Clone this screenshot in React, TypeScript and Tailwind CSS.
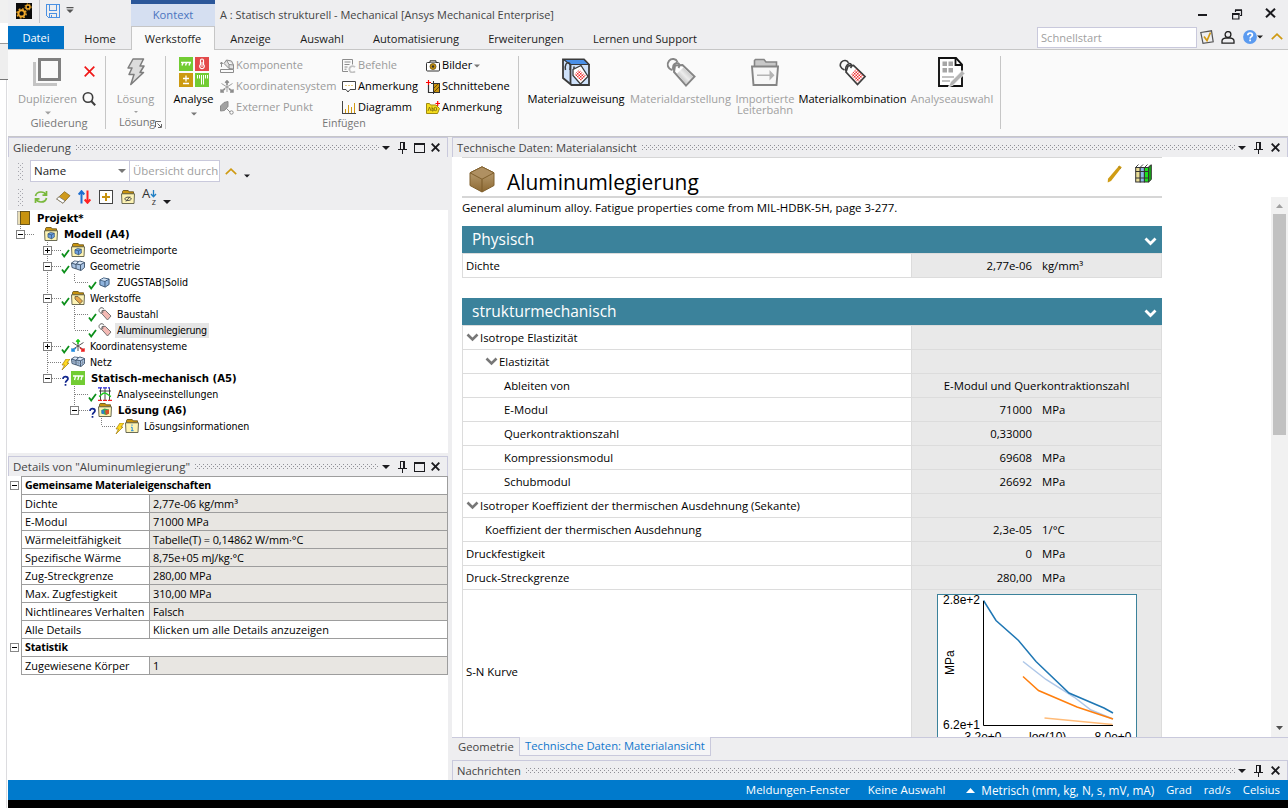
import type { ReactNode } from "react";

/* ---------- small shared glyphs ---------- */

function Caret({ className = "", color = "#777" }: { className?: string; color?: string }) {
  return (
    <svg width="8" height="4" viewBox="0 0 8 4" className={className}>
      <path d="M0 0h8L4 4z" fill={color} />
    </svg>
  );
}

function Dots({ id }: { id: string }) {
  return (
    <svg className="h-[5px] min-w-0 flex-1" shapeRendering="crispEdges">
      <defs>
        <pattern id={id} width="4" height="4" patternUnits="userSpaceOnUse">
          <rect width="1" height="1" fill="#8f8f96" />
          <rect x="2" y="2" width="1" height="1" fill="#8f8f96" />
        </pattern>
      </defs>
      <rect width="100%" height="5" fill={`url(#${id})`} />
    </svg>
  );
}

function Handle({ id }: { id: string }) {
  return (
    <svg width="5" height="17" shapeRendering="crispEdges">
      <defs>
        <pattern id={id} width="4" height="4" patternUnits="userSpaceOnUse">
          <rect width="1" height="1" fill="#a6a6ad" />
          <rect x="2" y="2" width="1" height="1" fill="#a6a6ad" />
        </pattern>
      </defs>
      <rect width="5" height="17" fill={`url(#${id})`} />
    </svg>
  );
}

function Pin() {
  return (
    <svg width="9" height="12" viewBox="0 0 9 12" shapeRendering="crispEdges">
      <path d="M2 0h5v7h2v1H5v4H4V8H0V7h2zM3 1v6h2V1z" fill="#1b1b1f" fillRule="evenodd" />
    </svg>
  );
}

function Cross() {
  return (
    <svg width="9" height="9" viewBox="0 0 9 9">
      <path d="M0.7 0.7l7.6 7.6M8.3 0.7L0.7 8.3" stroke="#1b1b1f" strokeWidth="1.9" />
    </svg>
  );
}

function PaneHeader({ title, id, square = false, titleClass = "text-[11.25px]" }: { title: string; id: string; square?: boolean; titleClass?: string }) {
  return (
    <div className="flex h-5 shrink-0 items-center border-x border-t border-[#c9c9dc] bg-[#eeeef0] pl-1 pr-[7px]">
      <span className={`mr-[5px] whitespace-nowrap leading-[18px] text-[#444] ${titleClass}`}>{title}</span>
      <Dots id={id} />
      <Caret className="ml-[3px]" color="#1b1b1f" />
      <span className="ml-2 flex">
        <Pin />
      </span>
      {square && (
        <svg width="11" height="10" viewBox="0 0 11 10" className="ml-[7px]" shapeRendering="crispEdges">
          <path d="M0 0h11v10H0zM1 2v7h9V2z" fill="#1b1b1f" fillRule="evenodd" />
        </svg>
      )}
      <span className={square ? "ml-[6px] flex" : "ml-[8px] flex"}>
        <Cross />
      </span>
    </div>
  );
}

/* ---------- ribbon icons ---------- */

function LogoIcon() {
  return (
    <svg width="16" height="16" viewBox="0 0 16 16">
      <rect width="16" height="16" fill="#0a0a0a" />
      <circle cx="5.6" cy="10.4" r="3.2" fill="none" stroke="#f0a92b" strokeWidth="2" />
      <circle cx="5.6" cy="10.4" r="4.6" fill="none" stroke="#f0a92b" strokeWidth="1.3" strokeDasharray="1.8 1.8" />
      <circle cx="12" cy="4" r="2" fill="none" stroke="#f0a92b" strokeWidth="1.4" />
      <circle cx="12" cy="4" r="3.1" fill="none" stroke="#f0a92b" strokeWidth="1" strokeDasharray="1.3 1.3" />
    </svg>
  );
}

function SaveIcon() {
  return (
    <svg width="14" height="14" viewBox="0 0 14 14" fill="none" stroke="#4a90e2" shapeRendering="crispEdges">
      <path d="M0.5 0.5h13v13h-11l-2-2zM3.5 0.5v6h7v-6M3.5 13.5v-4h7v4M5.5 10.5v3" />
    </svg>
  );
}

function DuplicateIcon() {
  return (
    <svg width="28" height="28" viewBox="0 0 28 28">
      <path d="M1.5 4v22.5H24" fill="none" stroke="#c4c4c4" strokeWidth="3" />
      <rect x="6.5" y="1.5" width="20" height="20" fill="#fafafa" stroke="#808080" strokeWidth="3" />
    </svg>
  );
}

function BoltIcon() {
  return (
    <svg width="18" height="28" viewBox="0 0 18 28">
      <path d="M6 1h10.500l-3.500 7h4l-4 6.500h3.500L3.800 26.500 7 16.500H2L5 10H1z" fill="#dcdcdc" stroke="#7d7d7d" strokeWidth="1.500" strokeLinejoin="round" />
    </svg>
  );
}

function AnalysisIcon() {
  return (
    <svg width="30" height="30" viewBox="0 0 30 30">
      <rect width="14" height="14" fill="#72cc33" />
      <path d="M2 5.500h10M4 6L3 8.500M7.500 6l-1 2.500M11 6l-1 2.500" stroke="#fff" strokeWidth="1.400" />
      <rect x="16" width="14" height="14" fill="#e34a4a" />
      <path d="M21.500 7.500V3.500a1.500 1.500 0 013 0v4a2.300 2.300 0 11-3 0z" fill="none" stroke="#fff" strokeWidth="1.200" />
      <path d="M23 5v5" stroke="#fff" />
      <rect y="16" width="14" height="14" fill="#cc9a10" />
      <path d="M4 21.500h6M7 18.500v6M4 26.500h6" stroke="#fff" strokeWidth="1.300" />
      <rect x="16" y="16" width="14" height="14" fill="#72cc33" />
      <path d="M18.500 18v3.500M20.500 18v3.500M22.500 18v9.500M24.500 18v9.500M26.500 18v3.500M28.500 18v3.500" stroke="#fff" strokeWidth="1" />
    </svg>
  );
}

function ComponentIcon() {
  return (
    <svg width="14" height="14" viewBox="0 0 14 14" fill="none" stroke="#8c8c8c">
      <path d="M4 4.500L6.500 1l5 1L13.500 6v4L9 9.500 4 4.500zM6.500 1L9 5.500l4.500.5M9 5.500v4" fill="#e2e2e2" />
      <path d="M0.500 10.500h13v3H.500zM1.500 8V3M0 5l1.500-2L3 5" />
    </svg>
  );
}

function CoordIcon({ colored = false }: { colored?: boolean }) {
  const [a, b, c] = colored ? ["#18d018", "#e22", "#1f8be0"] : ["#8c8c8c", "#8c8c8c", "#8c8c8c"];
  return (
    <svg width="14" height="14" viewBox="0 0 14 14" fill="none">
      <path d="M1.500 3.500l11 7M12.500 3.500l-11 7M7 1v11" stroke={colored ? "#555" : "#a0a0a0"} strokeWidth="1" />
      <path d="M7 5V1M5.200 2.800L7 .800l1.800 2" stroke={a} strokeWidth="1.500" />
      <path d="M9 9l3.500 2.500M13 9.300v2.700h-3" stroke={b} strokeWidth="1.500" />
      <path d="M5 9l-3.500 2.500M1 9.300v2.700h3" stroke={c} strokeWidth="1.500" />
    </svg>
  );
}

function RemotePointIcon() {
  return (
    <svg width="14" height="14" viewBox="0 0 14 14">
      <path d="M0.500 5L4 1.500 8 .500v5L4.500 9.500l-4 .500z" fill="#a2a2a2" stroke="#8c8c8c" />
      <path d="M6 7l4.500 4.500" stroke="#8c8c8c" />
      <circle cx="11.500" cy="11.500" r="1.700" fill="#fff" stroke="#8c8c8c" />
    </svg>
  );
}

function CommandsIcon() {
  return (
    <svg width="14" height="14" viewBox="0 0 14 14" fill="none">
      <path d="M6 12.500H.500V.500h10v5" stroke="#8c8c8c" />
      <path d="M2.500 3h6M2.500 5.500h5M2.500 8h3M2.500 10.200h2" stroke="#8c8c8c" />
      <path d="M13 8.200a3.200 3.200 0 100 4.200" stroke="#c2c2c2" strokeWidth="1.800" />
    </svg>
  );
}

function CommentIcon() {
  return (
    <svg width="14" height="12" viewBox="0 0 14 12" fill="none">
      <path d="M0.500.500h13v8H8l-2 2.500-2-2.500H.500z" fill="#fff" stroke="#444" />
      <path d="M3.500 4.500h1M6.500 4.500h1M9.500 4.500h1" stroke="#c90" />
    </svg>
  );
}

function ChartIcon() {
  return (
    <svg width="14" height="13" viewBox="0 0 14 13" fill="none" shapeRendering="crispEdges">
      <path d="M0.500 0v12.500H14" stroke="#444" />
      <path d="M3.500 12V8M6.500 12V4M9.500 12V6M12.500 12V2" stroke="#d39a12" />
    </svg>
  );
}

function CameraIcon() {
  return (
    <svg width="14" height="12" viewBox="0 0 14 12">
      <rect x="0.500" y="2.500" width="13" height="8.500" rx="1" fill="#fff" stroke="#333" />
      <path d="M4 2.500V.800h6v1.700" fill="#ddd" stroke="#333" />
      <circle cx="7" cy="6.500" r="3" fill="#c8930f" stroke="#6b5010" strokeWidth="0.800" />
      <circle cx="7" cy="6.500" r="1.200" fill="#333" />
    </svg>
  );
}

function SectionIcon() {
  return (
    <svg width="14" height="14" viewBox="0 0 14 14">
      <path d="M2.500 5v7.500h5M5 3.500h8" fill="none" stroke="#333" strokeWidth="1.200" />
      <rect x="7.500" y="3.500" width="6" height="9" fill="#c8930f" stroke="#333" />
      <path d="M8 8l4-4M8 12l5-5" stroke="#6a4d00" />
      <path d="M7.500 1v13" stroke="#333" />
      <path d="M0 2.500h5M2.500 0v5" stroke="#f00" strokeWidth="1.200" />
    </svg>
  );
}

function LabelIcon() {
  return (
    <svg width="14" height="14" viewBox="0 0 14 14">
      <path d="M0.500 2.500h3l1 1.500H10l3.500 3.500L11.500 12.500H.500z" fill="#f4dc1c" stroke="#a08b10" />
      <path d="M2 10l1.500-4L5 10M6 5.500V10h1.200V7.500H6M8.300 8a1.200 1.200 0 102.200 0 1.200 1.200 0 10-2.200 0" fill="none" stroke="#7a6a10" strokeWidth="0.800" />
      <path d="M9.500 2.500h4.500M11.700 0v5" stroke="#f00" strokeWidth="1.200" />
    </svg>
  );
}

function CheckerDefs({ id }: { id: string }) {
  return (
    <defs>
      <pattern id={id} width="3" height="3" patternUnits="userSpaceOnUse">
        <rect width="1.500" height="1.500" fill="#e33" />
        <rect x="1.500" y="1.500" width="1.500" height="1.500" fill="#e33" />
      </pattern>
    </defs>
  );
}

function MaterialAssignIcon() {
  return (
    <svg width="28" height="28" viewBox="0 0 28 28">
      <CheckerDefs id="chk-assign" />
      <path d="M1 1.500h21l5 5V27H9.500L1 20z" fill="#cfe2fb" stroke="#3a3a3a" strokeWidth="1.800" />
      <path d="M1.500 1.500H22l5 5H8z" fill="#4a90e8" stroke="#3a3a3a" strokeWidth="1.200" />
      <path d="M8.500 6.500V26" stroke="#3a3a3a" strokeWidth="1.800" />
      <path d="M3.500 12c-1-5 1-8 3.500-7s1 5 1 7M12 13V8.500" fill="none" stroke="#3a3a3a" strokeWidth="1.500" />
      <path d="M11 11.500l8-4 7 11-7.500 7.500-7.500-8.500z" fill="#fff" stroke="#3a3a3a" strokeWidth="1.300" />
      <path d="M17 11.500l7 6.500-5 5-6.500-6.500z" fill="url(#chk-assign)" />
    </svg>
  );
}

function MaterialDisplayIcon() {
  return (
    <svg width="30" height="30" viewBox="0 0 30 30">
      <defs>
        <linearGradient id="tag-fade" x1="0" y1="1" x2="1" y2="0">
          <stop offset="0" stopColor="#9a9a9a" />
          <stop offset="0.5" stopColor="#ececec" />
          <stop offset="1" stopColor="#a2a2a2" />
        </linearGradient>
      </defs>
      <path d="M9 8.500L8 15l12 13.500 8.500-9L16.500 8z" fill="#fff" stroke="#858585" strokeWidth="2" />
      <path d="M17.500 10.500l9.500 9-7 7.500-9-10.500z" fill="url(#tag-fade)" />
      <path d="M6 13C1.500 11.500.500 7 3 3.800c2.500-2.800 7-2.300 8.500 1.200M7.500 13.500C6.500 10 7.500 7 10.500 6c2.500-.5 4 2 2 5" fill="none" stroke="#858585" strokeWidth="1.900" />
    </svg>
  );
}

function MaterialCombineIcon() {
  return (
    <svg width="28" height="29" viewBox="0 0 28 29">
      <CheckerDefs id="chk-comb" />
      <path d="M9 8l-2 6 11.500 12.500 7.500-8L14.500 7.500z" fill="#fff" stroke="#3d3d3d" strokeWidth="1.700" />
      <path d="M17 11l7.500 7.300-5.800 6.200-7-7.500z" fill="url(#chk-comb)" />
      <path d="M5.500 12C1.500 10.500 0 7 2.500 4c2.300-2.300 5.500-1.800 7 .8M7 13c-1-3 .5-6.500 3-7.300 2.200-.5 3.500 1.800 1.500 4.300" fill="none" stroke="#3d3d3d" strokeWidth="1.600" />
    </svg>
  );
}

function ImportFolderIcon() {
  return (
    <svg width="28" height="28" viewBox="0 0 28 28">
      <path d="M3.500 9V2.500l1-1H13l2 2.500h10.500V9" fill="#c8c8c8" stroke="#858585" strokeWidth="1.600" />
      <path d="M1 8.500h26L25.500 27h-23z" fill="#f7f7f7" stroke="#858585" strokeWidth="1.900" />
      <path d="M6 16.500h12.500v-4.500l5 5.200-5 5.200V18H6z" fill="#b4b4b4" />
    </svg>
  );
}

function AnalysisSelectIcon() {
  return (
    <svg width="28" height="30" viewBox="0 0 28 30">
      <path d="M1 1h17l6 6.500V29H1z" fill="#fff" stroke="#111" strokeWidth="1.900" />
      <path d="M17.500 1v7H24" fill="none" stroke="#111" strokeWidth="1.800" />
      <path d="M4.500 4.500h4.500v4.500H4.500zM10.500 4.500H15v4.500h-4.500zM4.500 11h4.500v4.500H4.500zM10.500 11H15v4.500h-4.500z" fill="#a6a6a6" />
      <path d="M4 20h12M4 24h8" stroke="#b0b0b0" strokeWidth="1.500" />
      <path d="M24 13.500l3 3L15.500 28l-5 2 2-5z" fill="#b4b4b4" stroke="#fff" strokeWidth="0.800" />
    </svg>
  );
}

/* ---------- ribbon ---------- */

function RibbonRow({ icon, label, off = false, caret = false }: { icon: ReactNode; label: string; off?: boolean; caret?: boolean }) {
  return (
    <div className="flex h-[21px] items-center">
      <span className="flex w-[14px] shrink-0 justify-center">{icon}</span>
      <span className={`ml-[2px] whitespace-nowrap text-[11.05px] ${off ? "text-[#9b9b9b]" : "text-black"}`}>{label}</span>
      {caret && <Caret className="ml-[2px] w-[6px]" />}
    </div>
  );
}

function BigButton({ icon, label, width, off = false }: { icon: ReactNode; label: ReactNode; width: string; off?: boolean }) {
  return (
    <div className={`flex flex-col items-center pt-[7px] ${width}`}>
      <span className="flex h-[30px] items-center">{icon}</span>
      <span className={`mt-[6px] whitespace-nowrap text-center text-[11.1px] leading-[11px] ${off ? "text-[#a0a0a0]" : "text-black"}`}>{label}</span>
    </div>
  );
}

function Ribbon() {
  return (
    <div className="flex h-[86px] shrink-0 bg-[#fafafa] text-[11.1px]">
      <div className="mt-[6px] flex h-[73px] w-[98px] flex-col border-r border-[#c6c6c6]">
        <div className="flex h-[60px] items-start">
          <div className="ml-[10px] flex w-[59px] flex-col items-center">
            <span className="mr-px mt-[2px] flex">
              <DuplicateIcon />
            </span>
            <span className="mt-[4px] leading-[18px] text-[#9b9b9b]">Duplizieren</span>
            <Caret className="mt-[3px] w-[6px]" color="#a0a0a0" />
          </div>
          <div className="ml-[5px] flex flex-col items-center pt-[10px]">
            <svg width="11" height="11" viewBox="0 0 11 11">
              <path d="M0.700.700l9.600 9.600M10.300.700L.700 10.300" stroke="#f01818" strokeWidth="1.700" />
            </svg>
            <svg width="14" height="14" viewBox="0 0 14 14" className="mt-[15px]" fill="none" stroke="#3d3d3d">
              <circle cx="6" cy="5.500" r="4.700" strokeWidth="1.600" />
              <path d="M9.200 9l4 4.300" strokeWidth="2" />
            </svg>
          </div>
        </div>
        <span className="ml-[5px] text-center leading-[15px] text-[#767676]">Gliederung</span>
      </div>

      <div className="mt-[6px] flex h-[73px] w-[60px] flex-col items-center border-r border-[#c6c6c6]">
        <span className="mt-[2px] flex">
          <BoltIcon />
        </span>
        <span className="mt-[4px] leading-[18px] text-[#9b9b9b]">Lösung</span>
        <Caret className="mt-[3px] w-[6px]" color="#a0a0a0" />
        <span className="ml-[10px] mt-px flex items-end leading-[15px] text-[#767676]">
          <span className="tracking-[-0.2px]">Lösung</span>
          <svg width="7" height="7" viewBox="0 0 7 7" className="mb-px" fill="none" stroke="#666">
            <path d="M0.500 6V.500H6M2.500 2.500l3.500 3.500M6.500 3v3.500H3" />
          </svg>
        </span>
      </div>

      <div className="flex w-[54px] flex-col items-center pl-px pt-[7px]">
        <AnalysisIcon />
        <span className="mt-[3px] leading-[18px] text-black">Analyse</span>
        <Caret className="mt-[4px] w-[6px]" />
      </div>

      <div className="mt-[6px] flex h-[73px] w-[299px] flex-col border-r border-[#c6c6c6]">
        <div className="-mt-px flex h-[63px]">
          <div className="w-[122px]">
            <RibbonRow icon={<ComponentIcon />} label="Komponente" off />
            <RibbonRow icon={<CoordIcon />} label="Koordinatensystem" off />
            <RibbonRow icon={<RemotePointIcon />} label="Externer Punkt" off />
          </div>
          <div className="w-[84px]">
            <RibbonRow icon={<CommandsIcon />} label="Befehle" off />
            <RibbonRow icon={<CommentIcon />} label="Anmerkung" />
            <RibbonRow icon={<ChartIcon />} label="Diagramm" />
          </div>
          <div>
            <RibbonRow icon={<CameraIcon />} label="Bilder" caret />
            <RibbonRow icon={<SectionIcon />} label="Schnittebene" />
            <RibbonRow icon={<LabelIcon />} label="Anmerkung" />
          </div>
        </div>
        <span className="-mt-px w-[248px] text-center text-[10.6px] leading-[12px] text-[#767676]">Einfügen</span>
      </div>

      <div className="mt-[6px] flex h-[73px] w-[482px] border-r border-[#c6c6c6]">
        <div className="-mt-[6px] flex">
          <BigButton icon={<MaterialAssignIcon />} label="Materialzuweisung" width="w-[114px]" />
          <BigButton icon={<MaterialDisplayIcon />} label="Materialdarstellung" width="w-[95px]" off />
          <BigButton icon={<ImportFolderIcon />} label={<>Importierte<br />Leiterbahn</>} width="w-[74px]" off />
          <BigButton icon={<MaterialCombineIcon />} label="Materialkombination" width="w-[101px]" />
          <BigButton icon={<AnalysisSelectIcon />} label="Analyseauswahl" width="w-[98px]" off />
        </div>
      </div>
    </div>
  );
}

/* ---------- title and tabs ---------- */

function TitleBar() {
  return (
    <div className="flex h-[26px] shrink-0 text-[#444]">
      <div className="flex w-[123px] items-start pl-2 pt-[3px]">
        <LogoIcon />
        <span className="-mt-[3px] ml-[7px] h-[23px] w-px bg-[#c6c6cc]" />
        <span className="ml-[6px] mt-px flex">
          <SaveIcon />
        </span>
        <svg width="8" height="7" viewBox="0 0 8 7" className="ml-[6px] mt-[4px]">
          <path d="M0.500 0h7v1.300h-7zM.500 2.500h7L4 6z" fill="#555" />
        </svg>
      </div>
      <div className="flex w-[84px] items-center justify-center border-t-4 border-[#2b579a] bg-[#d5dff1] text-[11.2px] text-[#4a74bf]">Kontext</div>
      <span className="ml-[5px] pt-[6px] text-[10.97px] leading-[18px]">A : Statisch strukturell - Mechanical [Ansys Mechanical Enterprise]</span>
      <div className="ml-auto flex items-start pr-3 text-[#1b1b1f]">
        <span className="mt-[14px] h-[2px] w-[9px] bg-[#1b1b1f]" />
        <svg width="11" height="11" viewBox="0 0 11 11" className="ml-[25px] mt-[9px]" fill="none" stroke="#1b1b1f">
          <path d="M3.500 3V1.500h6v5H8" strokeWidth="1.200" />
          <path d="M3 1.200h7M.500 5.200h7" strokeWidth="1.800" />
          <path d="M0.600 4.500h6.300v5.500H.600z" strokeWidth="1.200" />
        </svg>
        <svg width="11" height="10" viewBox="0 0 11 10" className="ml-[22px] mt-[8px]">
          <path d="M1 .700l9 8.600M10 .700L1 9.300" stroke="#1b1b1f" strokeWidth="2" />
        </svg>
      </div>
    </div>
  );
}

function Tabs() {
  return (
    <div className="flex h-6 shrink-0 text-[11.1px] leading-[25px] text-[#1b1b1b] shadow-[inset_0_-1px_0_#c6c6c6]">
      <div className="h-[23px] w-14 bg-[#0072c6] text-center leading-[24px] text-white">Datei</div>
      <div className="w-[67px] pl-[5px] text-center">Home</div>
      <div className="w-[84px] border-x border-t border-[#c6c6c6] bg-[#fafafa] text-center leading-[24px]">Werkstoffe</div>
      <div className="w-[71px] text-center">Anzeige</div>
      <div className="w-[72px] text-center">Auswahl</div>
      <div className="w-[116px] text-center">Automatisierung</div>
      <div className="w-[104px] text-center">Erweiterungen</div>
      <div className="w-[134px] text-center">Lernen und Support</div>
      <div className="ml-auto flex pr-[5px] pt-px">
        <div className="h-[21px] w-[160px] border border-[#c9c9dc] bg-white pl-[3px] leading-[19px] text-[#a0a0a0]">Schnellstart</div>
        <svg width="14" height="14" viewBox="0 0 14 14" className="ml-[3px] mt-[3px]" fill="none">
          <path d="M0.800 2.500L11.500.800l1.700 11L3 13.300z" stroke="#555" strokeWidth="1.200" />
          <path d="M4 6.500l3 4L10.500 2.500" stroke="#d39a12" strokeWidth="1.700" />
        </svg>
        <svg width="14" height="13" viewBox="0 0 14 13" className="ml-[7px] mt-[4px]" fill="none" stroke="#222" strokeWidth="1.300">
          <circle cx="7" cy="3.500" r="2.900" />
          <path d="M1 12.200V10c0-1.600 1.500-2.700 3.800-3h4.400c2.300.300 3.800 1.400 3.800 3v2.200z" />
        </svg>
        <svg width="14" height="14" viewBox="0 0 14 14" className="ml-[8px] mt-[3px]">
          <circle cx="7" cy="7" r="6.900" fill="#5b9bf0" />
          <path d="M4.800 5.300c0-3 4.600-3 4.600-.3 0 1.700-2.300 1.700-2.300 3.500M7.100 9.600v1.700" stroke="#fff" strokeWidth="1.700" fill="none" />
        </svg>
        <Caret className="mt-[8px] w-[6px]" color="#222" />
        <svg width="12" height="7" viewBox="0 0 12 7" className="ml-[8px] mt-[6px]">
          <path d="M0.800 6.200L6 1.200l5.200 5" fill="none" stroke="#cf9a12" strokeWidth="1.700" />
        </svg>
      </div>
    </div>
  );
}

/* ---------- outline tree ---------- */

function FolderIcon({ children }: { children?: ReactNode }) {
  return (
    <svg width="14" height="14" viewBox="0 0 14 14">
      <path d="M1.500 4V1.500l.700-1h5l1 1.300h4.300V4z" fill="#c8930f" stroke="#5e4a10" strokeWidth="0.800" />
      <path d="M0.500 3.800h13l-.5 9.700H1z" fill="#fdf3b4" stroke="#5b5b45" strokeWidth="0.900" />
      {children}
    </svg>
  );
}

function Cube({ size = 12 }: { size?: number }) {
  return (
    <svg width={size} height={size} viewBox="0 0 12 12">
      <path d="M1 3.200L5 1l6 1.200v6L6.800 11 1 8.700z" fill="#8fb3dc" stroke="#35506e" />
      <path d="M1 3.200l5.500 1.600L11 2.200M6.500 4.800V11" fill="none" stroke="#35506e" />
      <path d="M1.600 3.200L5 1.600l5 .8-3.600 1.800z" fill="#d5e4f5" />
    </svg>
  );
}

const cubeInFolder = (
  <g transform="translate(3.300 4.800) scale(0.640)">
    <path d="M1 3.200L5 1l6 1.200v6L6.800 11 1 8.700z" fill="#6d9fe0" stroke="#24476e" />
    <path d="M1 3.200l5.500 1.600L11 2.200M6.500 4.800V11" fill="none" stroke="#24476e" />
  </g>
);

function Blocks({ mesh = false }: { mesh?: boolean }) {
  return (
    <svg width="14" height="12" viewBox="0 0 14 12">
      <path d="M0.500 3l3-2 4 .500 1.500-.5 4.500 1.500v5L10 10.500 5.500 9 1 7.500z" fill="#a9c4e4" stroke="#3b4f66" strokeWidth="0.900" />
      <path d="M1.500 3L4 1.600l3 .3L5 3.800zM6.500 3.500l2-1.700 4 .8-3 1.500z" fill="#dfeaf7" />
      <path d="M0.500 3L5 4.500l2.500-3M5 4.500V9M9.500 4.800l4-2.300M9.500 4.800v5.500M5 4l4.500.8" fill="none" stroke="#3b4f66" strokeWidth="0.900" />
      {mesh && <path d="M3 3.800v4.500M7.200 4.500v5M11.500 3.700v5.500M1 5.300l9 2.300 3.500-2" fill="none" stroke="#7d8896" strokeWidth="0.600" />}
    </svg>
  );
}

function TagIcon() {
  return (
    <svg width="14" height="14" viewBox="0 0 14 14">
      <path d="M4 3.500l-.3 3L9.500 13 13 9 7.300 3.300z" fill="#f3b9b4" stroke="#666" strokeWidth="0.900" />
      <path d="M3.500 6.500C1 5.500.300 3 1.800 1.500s3.500-.7 4 .5M4.800 6c-.4-1.600.4-3 1.400-3" fill="none" stroke="#666" />
    </svg>
  );
}

const icons: Record<string, ReactNode> = {
  project: (
    <svg width="13" height="14" viewBox="0 0 13 14">
      <rect x="0.500" y="0.500" width="3.500" height="13" fill="#eadfb8" stroke="#777" strokeDasharray="1 1" />
      <rect x="3.500" y="0.500" width="9" height="13" fill="#c8930f" stroke="#5e4a10" strokeWidth="0.900" />
    </svg>
  ),
  model: <FolderIcon>{cubeInFolder}</FolderIcon>,
  imports: <FolderIcon>{cubeInFolder}</FolderIcon>,
  geometry: <Blocks />,
  solid: <Cube size={11} />,
  materials: (
    <FolderIcon>
      <path d="M4 5.500h3l4.500 4.500-2.500 2.800L4 8z" fill="#e5a64a" stroke="#6b5a3a" strokeWidth="0.800" />
    </FolderIcon>
  ),
  tag: <TagIcon />,
  coord: <CoordIcon colored />,
  mesh: <Blocks mesh />,
  static: (
    <svg width="14" height="14" viewBox="0 0 14 14">
      <rect width="14" height="14" fill="#72cc33" />
      <path d="M2 5h10.500M4.500 5.500L3.500 9M7.800 5.500L6.800 9M11 5.500L10 9" stroke="#fff" strokeWidth="1.300" />
    </svg>
  ),
  settings: (
    <svg width="14" height="14" viewBox="0 0 14 14" fill="none">
      <path d="M2.500 1v12M7 1v12M11.500 1v12M1 4h12" stroke="#333" strokeWidth="0.900" />
      <path d="M0 .800h4M5 .800h4M10 .800h2" stroke="#22d" strokeWidth="1.200" />
      <path d="M0 13.300h4M5 13.300h4M10 13.300h4" stroke="#e22" strokeWidth="1.200" />
      <path d="M1 9.500c2-1 3-3.500 5.500-3.500S10 8.500 13 9.500" stroke="#2c2" strokeWidth="1.400" />
    </svg>
  ),
  solution: (
    <FolderIcon>
      <path d="M3.500 7l3-1.500 4.500 1v4L8 12 3.500 10.500z" fill="#3ba45c" />
      <path d="M7 7.500l4-1v4L8 12z" fill="#d6542b" />
      <path d="M3.500 7l2.500.5v3.500l-2.500-.5z" fill="#2a7fd0" />
    </FolderIcon>
  ),
  info: (
    <FolderIcon>
      <path d="M7 5.500v1.300M6 8.300h1.200V11.500M6 11.700h2.600" fill="none" stroke="#1f8be0" />
    </FolderIcon>
  ),
};

type Mark = "check" | "bolt" | "query" | "";
type Node = {
  label: string;
  icon: string;
  mark?: Mark;
  bold?: boolean;
  selected?: boolean;
  /* one code per indent column: space, | (through), L (last), T (branch), +/- expander, = expander ending its branch */
  cols: string;
};

const tree: Node[] = [
  { label: "Projekt*", icon: "project", bold: true, cols: "" },
  { label: "Modell (A4)", icon: "model", bold: true, cols: "=" },
  { label: "Geometrieimporte", icon: "imports", mark: "check", cols: " +" },
  { label: "Geometrie", icon: "geometry", mark: "check", cols: " -" },
  { label: "ZUGSTAB|Solid", icon: "solid", mark: "check", cols: " |L" },
  { label: "Werkstoffe", icon: "materials", mark: "check", cols: " -" },
  { label: "Baustahl", icon: "tag", mark: "check", cols: " |T" },
  { label: "Aluminumlegierung", icon: "tag", mark: "check", selected: true, cols: " |L" },
  { label: "Koordinatensysteme", icon: "coord", mark: "check", cols: " +" },
  { label: "Netz", icon: "mesh", mark: "bolt", cols: " T" },
  { label: "Statisch-mechanisch (A5)", icon: "static", mark: "query", bold: true, cols: " =" },
  { label: "Analyseeinstellungen", icon: "settings", mark: "check", cols: "  T" },
  { label: "Lösung (A6)", icon: "solution", mark: "query", bold: true, cols: "  =" },
  { label: "Lösungsinformationen", icon: "info", mark: "bolt", cols: "   L" },
];

function IndentCell({ code }: { code: string }) {
  const box = "+-=".includes(code);
  const through = "|T+-".includes(code);
  const half = "L=".includes(code);
  const branch = "LT+-=".includes(code);
  return (
    <svg width="27" height="16" viewBox="0 0 27 16" className="shrink-0" shapeRendering="crispEdges">
      {(through || half) && <path d={through ? "M7.500 0v16" : "M7.500 0v8"} stroke="#808080" strokeDasharray="1 1" />}
      {branch && <path d="M8 8.500h14" stroke="#808080" strokeDasharray="1 1" />}
      {box && (
        <>
          <rect x="3.500" y="4.500" width="8" height="8" fill="#fff" stroke="#808080" />
          <path d={code === "+" ? "M5 8.500h5M7.500 6v5" : "M5 8.500h5"} stroke="#000" />
        </>
      )}
    </svg>
  );
}

function StatusMark({ mark }: { mark: Mark }) {
  return (
    <span className="relative w-0 shrink-0">
      <svg width="9" height="11" viewBox="0 0 9 11" className="absolute -left-[6px] -top-[3px]" fill="none">
        {mark === "check" && <path d="M1 6.500l2.200 3L8 3" stroke="#0c8f1a" strokeWidth="1.800" />}
        {mark === "bolt" && <path d="M5 0h4L6 4h2L1 11l2.500-5H1z" fill="#ffd91f" stroke="#a07c10" strokeWidth="0.700" />}
        {mark === "query" && <path d="M2 4c0-3.500 5-3 5-.2C7 5.500 4.500 5.500 4.500 7.700M4.500 9v1.700" stroke="#10258c" strokeWidth="1.700" />}
      </svg>
    </span>
  );
}

function Tree() {
  return (
    <div className="h-[243px] shrink-0 bg-white font-['DejaVu_Sans_Condensed','DejaVu_Sans',sans-serif]">
      {tree.map((n) => (
        <div key={n.label} className="flex h-4 items-center pl-[5px]">
          {n.cols.split("").map((c, i) => (
            <IndentCell key={i} code={c} />
          ))}
          {n.mark && <StatusMark mark={n.mark} />}
          <span className="ml-[3px] flex w-[15px] shrink-0 justify-center">{icons[n.icon]}</span>
          <span
            className={`ml-[3px] whitespace-nowrap pl-[2px] pr-[2px] leading-[15px] text-black ${n.bold ? "pl-[3px] text-[11.25px] font-bold" : "text-[10.6px] tracking-[-0.03px]"} ${n.selected ? "bg-[#e5e5e5] tracking-[-0.22px]" : ""}`}
          >
            {n.label}
          </span>
        </div>
      ))}
    </div>
  );
}

function OutlinePane() {
  return (
    <>
      <PaneHeader title="Gliederung" id="dots-outline" square />
      <div className="flex h-[53px] shrink-0 flex-col">
        <div className="mt-[3px] flex h-[22px] items-center pl-[10px] text-[11.5px]">
          <Handle id="h1" />
          <div className="ml-[7px] flex h-[22px] w-[100px] items-center justify-between border border-[#c9c9dc] bg-white pl-[3px] pr-[3px] text-[#222]">
            Name
            <Caret />
          </div>
          <div className="h-[22px] w-[90px] overflow-hidden whitespace-nowrap border border-l-0 border-[#c9c9dc] bg-white pl-[3px] text-[11.4px] leading-[20px] text-[#a0a0a0]">Übersicht durch</div>
          <svg width="12" height="7" viewBox="0 0 12 7" className="ml-[5px]">
            <path d="M0.800 6.200L6 1.200l5.200 5" fill="none" stroke="#cf9a12" strokeWidth="1.600" />
          </svg>
          <Caret className="ml-[7px] mt-[9px] w-[6px]" color="#1b1b1f" />
        </div>
        <div className="mt-[5px] flex h-5 items-center pl-[10px]">
          <Handle id="h2" />
          <svg width="14" height="12" viewBox="0 0 14 12" className="ml-[11px]" fill="none" stroke="#79b83c" strokeWidth="1.700">
            <path d="M1.500 5C2 2.500 4.500 1 7 1s4 1 5 2.800M12.500 0v4.200H8.500M12.500 7c-.5 2.500-3 4-5.500 4S3 10 2 8.200M1.500 12V7.800h4" />
          </svg>
          <svg width="15" height="13" viewBox="0 0 15 13" className="ml-[8px]">
            <path d="M0.700 8L8.500.700l5.500 4-7 7.500z" fill="#cf9a1c" stroke="#8a6a1a" strokeWidth="0.800" />
            <path d="M0.700 8L3 5.800l6 4-2 2.400z" fill="#fff" stroke="#777" strokeWidth="0.800" />
          </svg>
          <svg width="13" height="14" viewBox="0 0 13 14" className="ml-[7px]" fill="none" strokeWidth="2">
            <path d="M3.500 13.500V1.500M.700 4.500l2.800-3.300 2.800 3.300" stroke="#1f6fd0" />
            <path d="M9.500.500v12M6.700 9.500l2.800 3.300 2.800-3.300" stroke="#f22" />
          </svg>
          <svg width="14" height="14" viewBox="0 0 14 14" className="ml-[8px]" shapeRendering="crispEdges">
            <rect x="0.500" y="0.500" width="13" height="13" fill="#fff" stroke="#444" />
            <path d="M7 3v8M3 7h8" stroke="#c8930f" strokeWidth="2" />
          </svg>
          <span className="ml-[8px] flex">
            <FolderIcon>
              <path d="M3.500 9c1.500-2.500 5.500-2.500 7 0-1.500 2-5.500 2-7 0zM5 11.500l4-5" fill="none" stroke="#444" strokeWidth="0.900" />
            </FolderIcon>
          </span>
          <span className="ml-[7px] flex items-start">
            <span className="-mt-[6px] text-[13px] leading-[18px] text-[#333]">A</span>
            <span className="flex flex-col items-center">
              <svg width="7" height="8" viewBox="0 0 7 8">
                <path d="M3.500 0v6.500M1 4l2.500 2.800L6 4" fill="none" stroke="#1f7fc4" strokeWidth="1.300" />
              </svg>
              <span className="text-[9px] leading-[7px] text-[#333]">z</span>
            </span>
          </span>
          <Caret className="ml-[6px] mt-[10px]" color="#1b1b1f" />
        </div>
      </div>
      <Tree />
    </>
  );
}

/* ---------- details ---------- */

const details: { head?: string; k?: string; v?: string; plain?: boolean }[] = [
  { head: "Gemeinsame Materialeigenschaften" },
  { k: "Dichte", v: "2,77e-06 kg/mm³" },
  { k: "E-Modul", v: "71000 MPa" },
  { k: "Wärmeleitfähigkeit", v: "Tabelle(T) = 0,14862 W/mm·°C" },
  { k: "Spezifische Wärme", v: "8,75e+05 mJ/kg·°C" },
  { k: "Zug-Streckgrenze", v: "280,00 MPa" },
  { k: "Max. Zugfestigkeit", v: "310,00 MPa" },
  { k: "Nichtlineares Verhalten", v: "Falsch" },
  { k: "Alle Details", v: "Klicken um alle Details anzuzeigen", plain: true },
  { head: "Statistik" },
  { k: "Zugewiesene Körper", v: "1" },
];

function DetailsPane() {
  return (
    <>
      <PaneHeader title={'Details von "Aluminumlegierung"'} id="dots-details" square titleClass="text-[11.5px]" />
      <div className="flex-1 bg-white text-[10.95px] leading-[17px] text-black">
        <div className="flex flex-col">
          {details.map((d, i) => (
            <div key={i} className="flex h-[18px]">
              <div className="flex w-[13px] shrink-0 items-center justify-center">
                {d.head && (
                  <svg width="9" height="9" viewBox="0 0 9 9" shapeRendering="crispEdges">
                    <rect x="0.500" y="0.500" width="8" height="8" fill="#fff" stroke="#888" />
                    <path d="M2 4.500h5" stroke="#000" />
                  </svg>
                )}
              </div>
              <div className={`flex flex-1 border-l border-r border-t border-[#9d9d9d] ${i === details.length - 1 ? "shadow-[0_1px_0_#9d9d9d]" : ""}`}>
                {d.head ? (
                  <span className="pl-[3px] text-[10.6px] font-bold tracking-[-0.17px]">{d.head}</span>
                ) : (
                  <>
                    <span className="w-[127px] whitespace-nowrap pl-[3px]">{d.k}</span>
                    <span className={`flex-1 border-l border-[#9d9d9d] pl-[3px] ${d.plain ? "tracking-[0.05px]" : "bg-[#e8e6e2] tracking-[-0.1px]"}`}>{d.v}</span>
                  </>
                )}
              </div>
            </div>
          ))}
        </div>
      </div>
    </>
  );
}

/* ---------- material view ---------- */

function SectionHead({ title }: { title: string }) {
  return (
    <div className="flex h-[27px] items-center justify-between bg-[#3b829b] pl-[10px] pr-[5px] pt-px text-[15.5px] text-white">
      {title}
      <svg width="13" height="9" viewBox="0 0 13 9" className="mt-[2px]">
        <path d="M1.500 1.500l5 5 5-5" fill="none" stroke="#fff" strokeWidth="2.800" />
      </svg>
    </div>
  );
}

type Prop = { label: string; pad: string; open?: boolean; v?: string; u?: string; wide?: string };

const props: Prop[] = [
  { label: "Isotrope Elastizität", pad: "pl-[3px]", open: true },
  { label: "Elastizität", pad: "pl-[22px]", open: true },
  { label: "Ableiten von", pad: "pl-[41px]", wide: "E-Modul und Querkontraktionszahl" },
  { label: "E-Modul", pad: "pl-[41px]", v: "71000", u: "MPa" },
  { label: "Querkontraktionszahl", pad: "pl-[41px]", v: "0,33000", u: "" },
  { label: "Kompressionsmodul", pad: "pl-[41px]", v: "69608", u: "MPa" },
  { label: "Schubmodul", pad: "pl-[41px]", v: "26692", u: "MPa" },
  { label: "Isotroper Koeffizient der thermischen Ausdehnung (Sekante)", pad: "pl-[3px]", open: true },
  { label: "Koeffizient der thermischen Ausdehnung", pad: "pl-[22px]", v: "2,3e-05", u: "1/°C" },
  { label: "Druckfestigkeit", pad: "pl-[3px]", v: "0", u: "MPa" },
  { label: "Druck-Streckgrenze", pad: "pl-[3px]", v: "280,00", u: "MPa" },
];

function PropRow({ p }: { p: Prop }) {
  return (
    <div className="flex h-6 border-x border-b border-[#dcdcdc] leading-[23px]">
      <div className={`flex w-[448px] items-center whitespace-nowrap ${p.pad}`}>
        {p.open && (
          <svg width="13" height="9" viewBox="0 0 13 9" className="mr-px">
            <path d="M1.500 1.500l5 5 5-5" fill="none" stroke="#777" strokeWidth="2.600" />
          </svg>
        )}
        {p.label}
      </div>
      <div className="flex flex-1 border-l border-[#dcdcdc] bg-[#e9e9e9]">
        {p.wide ? (
          <span className="w-full text-center">{p.wide}</span>
        ) : (
          <>
            <span className="w-[120px] text-right">{p.v}</span>
            <span className="ml-[10px]">{p.u}</span>
          </>
        )}
      </div>
    </div>
  );
}

function SNChart() {
  return (
    <svg width="200" height="156" viewBox="937 594 200 156" fontFamily="'Liberation Sans', sans-serif" fontSize="12">
      <rect x="937.500" y="594.500" width="199" height="154" fill="#fff" stroke="#3b829b" />
      <g fill="none" strokeWidth="1.500">
        <polyline points="1044.500,718 1112.500,724.500" stroke="#ffbb78" />
        <polyline points="1023,661.500 1046,679.500 1074,697 1091,710 1113,719" stroke="#aec7e8" />
        <polyline points="1023,676.500 1038.500,690.500 1077,707 1113,719" stroke="#ff7f0e" />
        <polyline points="983.500,600.500 996,620.500 1018.500,640.500 1036,661.500 1069,693 1104,708 1113,713" stroke="#1f77b4" />
      </g>
      <path d="M983.500 601v124.500H1113" fill="none" stroke="#000" />
      <text x="943" y="604">2.8e+2</text>
      <text x="943" y="729">6.2e+1</text>
      <text transform="translate(953.500 675) rotate(-90)">MPa</text>
      <text x="964.500" y="740.500">3.2e+0</text>
      <text x="1029" y="740.500">log(10)</text>
      <text x="1094.500" y="740.500">8.0e+0</text>
    </svg>
  );
}

function MaterialView() {
  return (
    <div className="flex h-[580px] shrink-0 overflow-hidden bg-white">
      <div className="ml-[10px] w-[700px] text-[11.35px] text-black">
        <div className="flex h-[41px] items-start border-b-2 border-t border-[#d6d6d6]">
          <svg width="26" height="28" viewBox="0 0 26 28" className="ml-[7px] mt-[8px]">
            <defs>
              <linearGradient id="cube-face" x1="0" y1="0" x2="0" y2="1">
                <stop offset="0" stopColor="#c2a77d" />
                <stop offset="1" stopColor="#8d6932" />
              </linearGradient>
            </defs>
            <path d="M13 .800l12 6v12.700l-12 6.500-12-6.500V6.800z" fill="url(#cube-face)" stroke="#80602e" />
            <path d="M13 .800l12 6-12 6.400L1 6.800z" fill="#af9062" stroke="#80602e" />
            <path d="M13 13.200V26" stroke="#80602e" strokeWidth="1.200" />
          </svg>
          <span className="ml-[12px] mt-[9px] text-[20.9px] leading-[31px]">Aluminumlegierung</span>
          <svg width="15" height="18" viewBox="0 0 15 18" className="ml-auto mt-[7px]">
            <path d="M12.300.500l2.500 1.700L4 16l-3.300 1.500.300-3.800z" fill="#d09c14" />
            <path d="M11.300 1.700l2.500 1.900" stroke="#a8852a" />
          </svg>
          <svg width="17" height="19" viewBox="0 0 17 19" className="ml-[13px] mr-[10px] mt-[6px]">
            <path d="M0.500 3.500l3-3M5 3.500l3-3M9.500 3.500l3-3M13 3.500l3-3" stroke="#444" />
            <rect x="0.700" y="3.500" width="4.500" height="14.500" fill="#e8dc96" stroke="#333" />
            <rect x="5.200" y="3.500" width="4.200" height="14.500" fill="#8fb8e8" stroke="#333" />
            <rect x="9.400" y="3.500" width="4.200" height="14.500" fill="#1ee01e" stroke="#333" />
            <path d="M13.600 3.500l2.700-2.500v14.500l-2.700 2.500z" fill="#12b012" stroke="#333" />
            <path d="M0.700 7.500h13M.700 14h13" stroke="#333" />
          </svg>
        </div>
        <p className="h-7 whitespace-nowrap text-[11.45px] leading-[19px]">General aluminum alloy. Fatigue properties come from MIL-HDBK-5H, page 3-277.</p>
        <SectionHead title="Physisch" />
        <div className="border-t border-[#dcdcdc]">
          <PropRow p={{ label: "Dichte", pad: "pl-[3px]", v: "2,77e-06", u: "kg/mm³" }} />
        </div>
        <div className="h-5" />
        <SectionHead title="strukturmechanisch" />
        <div className="border-t border-[#dcdcdc]">
          {props.map((p) => (
            <PropRow key={p.label} p={p} />
          ))}
        </div>
        <div className="flex h-[163px] border-x border-[#dcdcdc]">
          <div className="flex w-[448px] items-center pl-[3px]">S-N Kurve</div>
          <div className="flex flex-1 border-l border-[#dcdcdc] bg-[#e9e9e9] pl-[25px] pt-[4px]">
            <SNChart />
          </div>
        </div>
      </div>
      <div className="ml-auto mt-10 flex w-[17px] flex-col items-center justify-between bg-[#f1f1f1] pb-[7px] pt-[7px]">
        <div className="flex flex-col items-center">
          <svg width="7" height="4" viewBox="0 0 7 4">
            <path d="M0 4h7L3.500 0z" fill="#a0a0a0" />
          </svg>
          <span className="mt-[6px] h-[221px] w-[13px] bg-[#c1c1c1]" />
        </div>
        <svg width="7" height="4" viewBox="0 0 7 4">
          <path d="M0 0h7L3.500 4z" fill="#505050" />
        </svg>
      </div>
    </div>
  );
}

/* ---------- app ---------- */

export default function App() {
  return (
    <div className="flex h-[808px] w-[1288px] overflow-hidden bg-white font-['Open_Sans','Noto_Sans',sans-serif]">
      <div className="flex w-2 shrink-0 flex-col">
        <div className="h-[23px] bg-[#f0f0f0]" />
        <div className="h-[21px] border-b border-[#999] bg-white" />
        <div className="h-9 border-b border-[#777] bg-[#eeeeee]" />
        <div className="w-[7px] flex-1 border-r border-[#dcdcdf] bg-white" />
      </div>
      <div className="flex w-[1280px] flex-col bg-[#eeeef0]">
        <TitleBar />
        <Tabs />
        <Ribbon />
        <div className="h-px shrink-0 bg-[#c6c6c9]" />
        <div className="flex h-[643px] shrink-0">
          <div className="flex w-[440px] flex-col">
            <OutlinePane />
            <div className="h-[3px] shrink-0" />
            <DetailsPane />
          </div>
          <div className="ml-1 flex w-[836px] flex-col">
            <PaneHeader title="Technische Daten: Materialansicht" id="dots-mat" />
            <MaterialView />
            <div className="flex h-[23px] shrink-0 text-[11.25px] leading-[17px] text-[#444]">
              <div className="w-[67px] border-t border-[#c9c9dc] pl-[6px]">Geometrie</div>
              <div className="h-[19px] w-[192px] border-x border-b border-[#c9c9dc] bg-[#f5f5f7] pl-[5px] leading-[18px] text-[#1177cc]">Technische Daten: Materialansicht</div>
              <div className="flex-1 border-t border-[#c9c9dc]" />
            </div>
            <PaneHeader title="Nachrichten" id="dots-msg" />
          </div>
        </div>
        <div className="flex h-5 shrink-0 items-center justify-end bg-[#007acc] pr-2 text-[11.45px] leading-[20px] text-white">
          <span>Meldungen-Fenster</span>
          <span className="ml-[18px]">Keine Auswahl</span>
          <svg width="9" height="5" viewBox="0 0 9 5" className="ml-[21px] mr-[6px]">
            <path d="M0 5h9L4.500 0z" fill="#fff" />
          </svg>
          <span className="text-[11.75px]">Metrisch (mm, kg, N, s, mV, mA)</span>
          <span className="ml-3 text-[11.1px]">Grad</span>
          <span className="ml-3 text-[11.1px]">rad/s</span>
          <span className="ml-3">Celsius</span>
        </div>
        <div className="flex-1 bg-black" />
      </div>
    </div>
  );
}
